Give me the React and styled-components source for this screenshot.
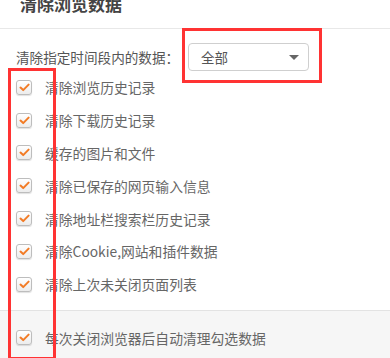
import styled, { createGlobalStyle } from "styled-components";

const GlobalStyle = createGlobalStyle`
  html, body {
    margin: 0;
    padding: 0;
    background: #fff;
  }
  body {
    font-family: "Noto Sans CJK SC", "Noto Sans", sans-serif;
  }
`;

const items = [
  "清除浏览历史记录",
  "清除下载历史记录",
  "缓存的图片和文件",
  "清除已保存的网页输入信息",
  "清除地址栏搜索栏历史记录",
  "清除Cookie,网站和插件数据",
  "清除上次未关闭页面列表",
];

const CheckBox = () => (
  <Box>
    <svg width="11" height="9" viewBox="0 0 11 9">
      <path
        d="M1.5 4.6 L4.2 7.1 L9.6 1.6"
        fill="none"
        stroke="#f27b25"
        strokeWidth="2"
        strokeLinecap="round"
        strokeLinejoin="round"
      />
    </svg>
  </Box>
);

const App = () => {
  return (
    <Page>
      <GlobalStyle />
      <Header>
        <Title>清除浏览数据</Title>
      </Header>
      <Body>
        <TimeRow>
          <Label>清除指定时间段内的数据：</Label>
          <SelectWrap>
            <Select>
              <span>全部</span>
              <Arrow />
            </Select>
            <Mark $top={-15} $left={-6} $width={140} $height={55} />
          </SelectWrap>
        </TimeRow>
        <List>
          {items.map((t) => (
            <Row key={t}>
              <CheckBox />
              <RowText>{t}</RowText>
            </Row>
          ))}
        </List>
      </Body>
      <Footer>
        <Row>
          <CheckBox />
          <RowText>每次关闭浏览器后自动清理勾选数据</RowText>
        </Row>
      </Footer>
      <Mark $top={68} $left={8} $width={48} $height={292} />
    </Page>
  );
};

const Page = styled.div`
  position: relative;
  width: 390px;
  height: 358px;
  overflow: hidden;
  background: #fff;
`;

const Header = styled.div`
  height: 29px;
  box-sizing: border-box;
  border-bottom: 1px solid #e8e8e8;
  padding: 0 0 14px 20px;
  display: flex;
  align-items: flex-end;
`;

const Title = styled.div`
  font-size: 17px;
  line-height: 20px;
  font-weight: bold;
  color: #444;
`;

const Body = styled.div`
  padding: 14px 0 0 16px;
`;

const TimeRow = styled.div`
  display: flex;
  align-items: center;
  height: 28px;
`;

const Label = styled.span`
  font-size: 13.6px;
  color: #555;
  width: 172px;
  white-space: nowrap;
`;

const SelectWrap = styled.div`
  position: relative;
`;

const Select = styled.div`
  box-sizing: border-box;
  width: 121px;
  height: 28px;
  border: 1px solid #cfcfcf;
  border-radius: 4px;
  display: flex;
  align-items: center;
  justify-content: space-between;
  padding: 0 9px 0 12px;
  font-size: 13.5px;
  color: #555;
  background: #fff;
`;

const Arrow = styled.span`
  width: 0;
  height: 0;
  border-left: 5px solid transparent;
  border-right: 5px solid transparent;
  border-top: 5px solid #666;
`;

const Mark = styled.div`
  position: absolute;
  top: ${(p) => p.$top}px;
  left: ${(p) => p.$left}px;
  width: ${(p) => p.$width}px;
  height: ${(p) => p.$height}px;
  box-sizing: border-box;
  border: 3px solid #f33;
  pointer-events: none;
`;

const List = styled.div`
  display: flex;
  flex-direction: column;
`;

const Row = styled.div`
  display: flex;
  align-items: center;
  height: 32.8px;
`;

const Box = styled.span`
  box-sizing: border-box;
  width: 16px;
  height: 15px;
  border: 1px solid #bdbdbd;
  border-radius: 3px;
  background: linear-gradient(#ffffff, #ececec);
  box-shadow: 0 1px 1px rgba(0, 0, 0, 0.12);
  display: flex;
  align-items: center;
  justify-content: center;
  flex-shrink: 0;
`;

const RowText = styled.span`
  margin-left: 13px;
  font-size: 13.8px;
  color: #666;
  white-space: nowrap;
`;

const Footer = styled.div`
  margin-top: 9px;
  border-top: 1px solid #e3e3e3;
  background: #f6f6f6;
  padding: 11px 0 20px 16px;
`;

export default App;
